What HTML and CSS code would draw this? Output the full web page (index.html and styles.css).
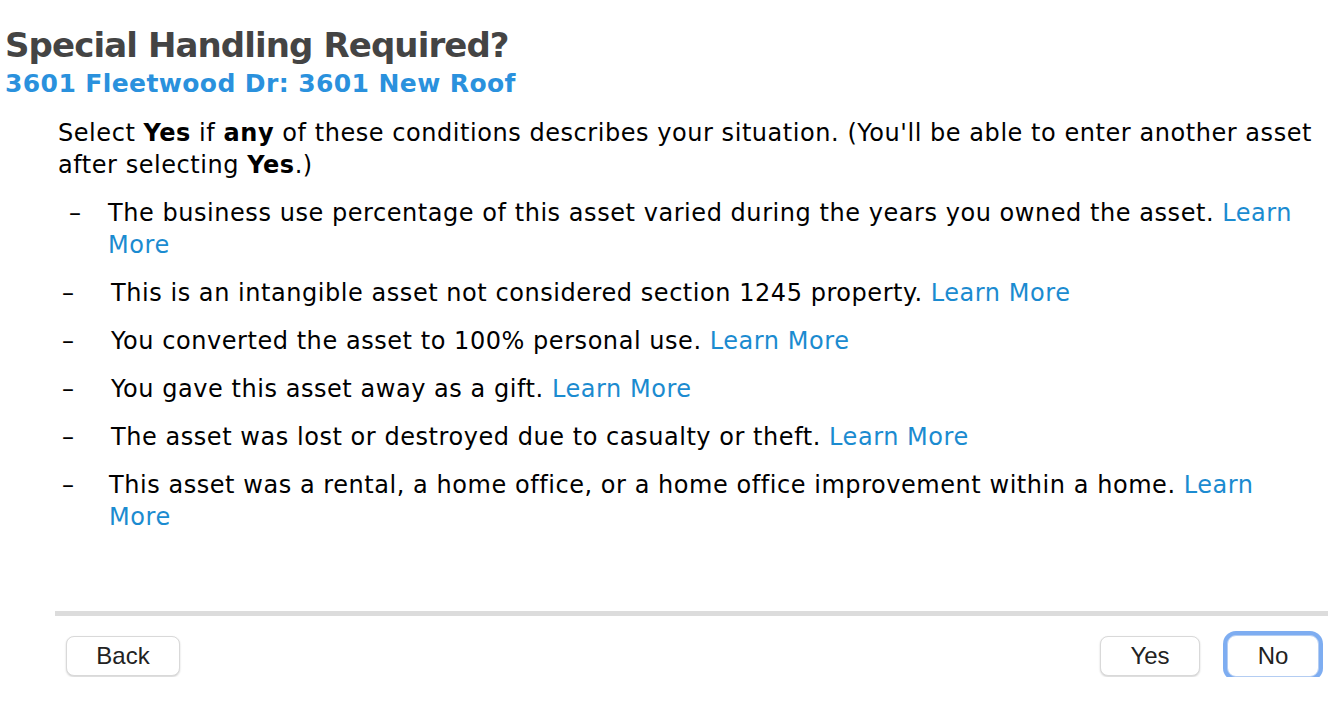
FILE: index.html
```html
<!DOCTYPE html>
<html>
<head>
<meta charset="utf-8">
<link rel="stylesheet" href="styles.css">
</head>
<body>
<div class="page">
  <h1 class="title">Special Handling Required?</h1>
  <h2 class="subtitle">3601 Fleetwood Dr: 3601 New Roof</h2>
  <div class="content">
    <p class="intro">Select <b>Yes</b> if <b>any</b> of these conditions describes your situation. (You'll be able to enter another asset after selecting <b>Yes</b>.)</p>
    <ul class="list">
      <li class="item first"><span class="dash">–</span><span class="txt">The business use percentage of this asset varied during the years you owned the asset. <a href="#">Learn More</a></span></li>
      <li class="item"><span class="dash">–</span><span class="txt">This is an intangible asset not considered section 1245 property. <a href="#">Learn More</a></span></li>
      <li class="item"><span class="dash">–</span><span class="txt">You converted the asset to 100% personal use. <a href="#">Learn More</a></span></li>
      <li class="item"><span class="dash">–</span><span class="txt">You gave this asset away as a gift. <a href="#">Learn More</a></span></li>
      <li class="item"><span class="dash">–</span><span class="txt">The asset was lost or destroyed due to casualty or theft. <a href="#">Learn More</a></span></li>
      <li class="item last"><span class="dash">–</span><span class="txt">This asset was a rental, a home office, or a home office improvement within a home. <a href="#">Learn More</a></span></li>
    </ul>
  </div>
  <div class="footer">
    <button class="btn back">Back</button>
    <div class="right">
      <button class="btn yes">Yes</button>
      <button class="btn focus">No</button>
    </div>
  </div>
</div>
</body>
</html>
```
FILE: styles.css
```css
html, body { margin: 0; padding: 0; background: #fff; }
body { font-family: "DejaVu Sans", "Liberation Sans", sans-serif; color: #000; }
.page { padding: 25px 0 0 5px; width: 1337px; }
.title { margin: 0; font-size: 34px; font-weight: bold; color: #444; line-height: 40px; letter-spacing: -0.9px; }
.subtitle { margin: 4px 0 0 0; font-size: 25px; font-weight: bold; color: #2a91dd; line-height: 30px; letter-spacing: 0.4px; }
.content { padding: 18px 0 0 53px; font-size: 24px; line-height: 32px; letter-spacing: 0.55px; }
.intro { margin: 0; width: 1264px; }
.list { list-style: none; margin: 16px 0 0 0; padding: 0; }
.item { display: flex; margin-bottom: 16px; width: 1264px; }
.dash { width: 53px; padding-left: 4px; box-sizing: border-box; flex: none; }
.first .dash { width: 50px; padding-left: 11px; }
.last .dash { width: 51px; }
.txt { flex: 1; }
a { color: #1b8bd0; text-decoration: none; }
.footer { margin: 78px 14px 0 50px; border-top: 5px solid #dcdcdc; padding: 19px 9px 0 11px; display: flex; justify-content: space-between; align-items: center; }
.right { display: flex; gap: 27px; align-items: center; }
.btn { font-family: "Liberation Sans", Arial, sans-serif; font-size: 24px; color: #222; background: #fff; border: 1px solid #d9d9d9; border-radius: 8px; height: 40px; width: 114px; box-shadow: 0 1px 2px rgba(0,0,0,0.18); padding: 0; }
.yes { width: 100px; }
.focus { width: 92px; height: 42px; border: 1px solid #b4cdf2; box-shadow: 0 0 0 4px #7eadf1; border-radius: 9px; }
```
